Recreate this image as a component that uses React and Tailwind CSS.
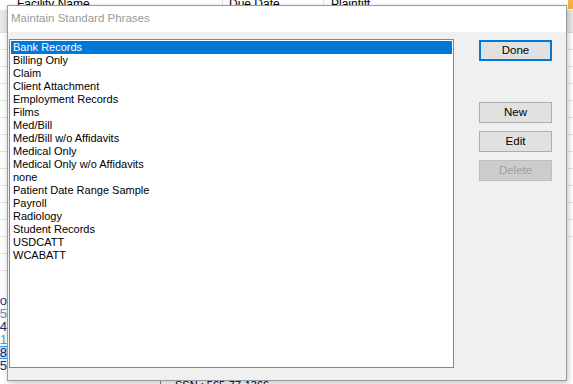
import React from "react";

const items = [
  "Bank Records",
  "Billing Only",
  "Claim",
  "Client Attachment",
  "Employment Records",
  "Films",
  "Med/Bill",
  "Med/Bill w/o Affidavits",
  "Medical Only",
  "Medical Only w/o Affidavits",
  "none",
  "Patient Date Range Sample",
  "Payroll",
  "Radiology",
  "Student Records",
  "USDCATT",
  "WCABATT",
];

const bgRows = Array.from({ length: 22 });
const leftNums = [
  { t: "o", c: "text-[#1a3a8a]", sel: false },
  { t: "25", c: "text-[#6b8bbf]", sel: false },
  { t: "4", c: "text-[#1a2a6a]", sel: false },
  { t: "11", c: "text-[#3aa0d0]", sel: false },
  { t: "8", c: "text-[#1a2a6a]", sel: true },
  { t: "25", c: "text-[#1a2a6a]", sel: false },
];

function Btn({ children, primary, disabled, className = "" }) {
  const base =
    "w-[73px] h-[21px] flex items-center justify-center text-[11.5px] leading-none";
  let style;
  if (primary) style = "border-2 border-[#0078d7] bg-[#e1e1e1] text-black";
  else if (disabled)
    style = "border border-[#bfbfbf] bg-[#cccccc] text-[#a0a0a0]";
  else style = "border border-[#adadad] bg-[#e1e1e1] text-black";
  return <div className={`${base} ${style} ${className}`}>{children}</div>;
}

export default function App() {
  return (
    <div
      className="relative w-[573px] h-[384px] overflow-hidden bg-white"
      style={{ fontFamily: '"Liberation Sans", Arial, sans-serif' }}
    >
      {/* Background application */}
      <div className="absolute inset-0">
        <div className="flex h-[11px] bg-white border-b border-[#e5e5e5] text-[12px] text-black leading-none overflow-hidden">
          <div className="w-[223px] border-r border-[#e5e5e5] pl-[17px] -mt-[2px]">
            Facility Name
          </div>
          <div className="w-[101px] border-r border-[#e5e5e5] pl-[6px] -mt-[2px]">
            Due Date
          </div>
          <div className="flex-1 pl-[7px] -mt-[2px]">Plaintiff</div>
          <div className="w-[5px] h-[9px] bg-[#f5b342]" />
        </div>
        <div className="absolute right-0 top-[11px] w-[8px] h-[230px] flex flex-col">
          <div className="h-[22px] bg-[#e8e8e8] border-b border-[#dcdcdc]" />
          {bgRows.slice(0, 12).map((_, i) => (
            <div key={i} className="h-[17px] border-b border-[#e2e2e2]" />
          ))}
        </div>
        <div className="absolute left-0 top-[11px] w-[7px] flex flex-col">
          <div className="h-[22px] bg-[#e8e8e8] border-b border-[#dcdcdc]" />
          {bgRows.slice(0, 14).map((_, i) => (
            <div key={i} className="h-[17px] border-b border-[#e2e2e2]" />
          ))}
        </div>
        <div className="absolute left-0 top-[294px] w-[7px] flex flex-col text-[13px] leading-[13px]">
          {leftNums.map((n, i) => (
            <div
              key={i}
              className={`h-[13px] flex justify-end overflow-hidden whitespace-nowrap ${
                n.sel ? "bg-[#cce4f7] border-y border-[#3399ff] leading-[11px]" : ""
              } ${n.c}`}
            >
              <span className="shrink-0">{n.t}</span>
            </div>
          ))}
        </div>
        <div className="absolute left-[160px] top-[378px] h-[10px] border-l border-[#888]" />
        <div className="absolute left-[175px] top-[380px] text-[11px] leading-none text-black">
          SSN : 565-77-1366
        </div>
      </div>

      {/* Dialog window */}
      <div className="absolute left-[7px] top-[5px] w-[560px] h-[376px] border border-[#9a9a9a] bg-[#f0f0f0] shadow-[1px_2px_6px_rgba(0,0,0,0.25)] flex flex-col">
        <div className="h-[26px] bg-white flex items-center pl-[3px] text-[11.5px] text-[#9a9a9a]">
          Maintain Standard Phrases
        </div>
        <div className="flex pl-[1px] pt-[7px]">
          <div className="w-[445px] h-[329px] border border-[#828790] bg-white pt-[1px] px-[1px]">
            {items.map((t, i) => (
              <div
                key={t}
                className={`h-[13px] leading-[13px] text-[11px] pl-[2px] whitespace-nowrap ${
                  i === 0 ? "bg-[#0078d7] text-white" : "text-black"
                }`}
              >
                {t}
              </div>
            ))}
          </div>
          <div className="ml-[25px] flex flex-col pt-[1px]">
            <Btn primary>Done</Btn>
            <Btn className="mt-[41px]">New</Btn>
            <Btn className="mt-[8px]">Edit</Btn>
            <Btn disabled className="mt-[8px]">Delete</Btn>
          </div>
        </div>
      </div>
    </div>
  );
}
